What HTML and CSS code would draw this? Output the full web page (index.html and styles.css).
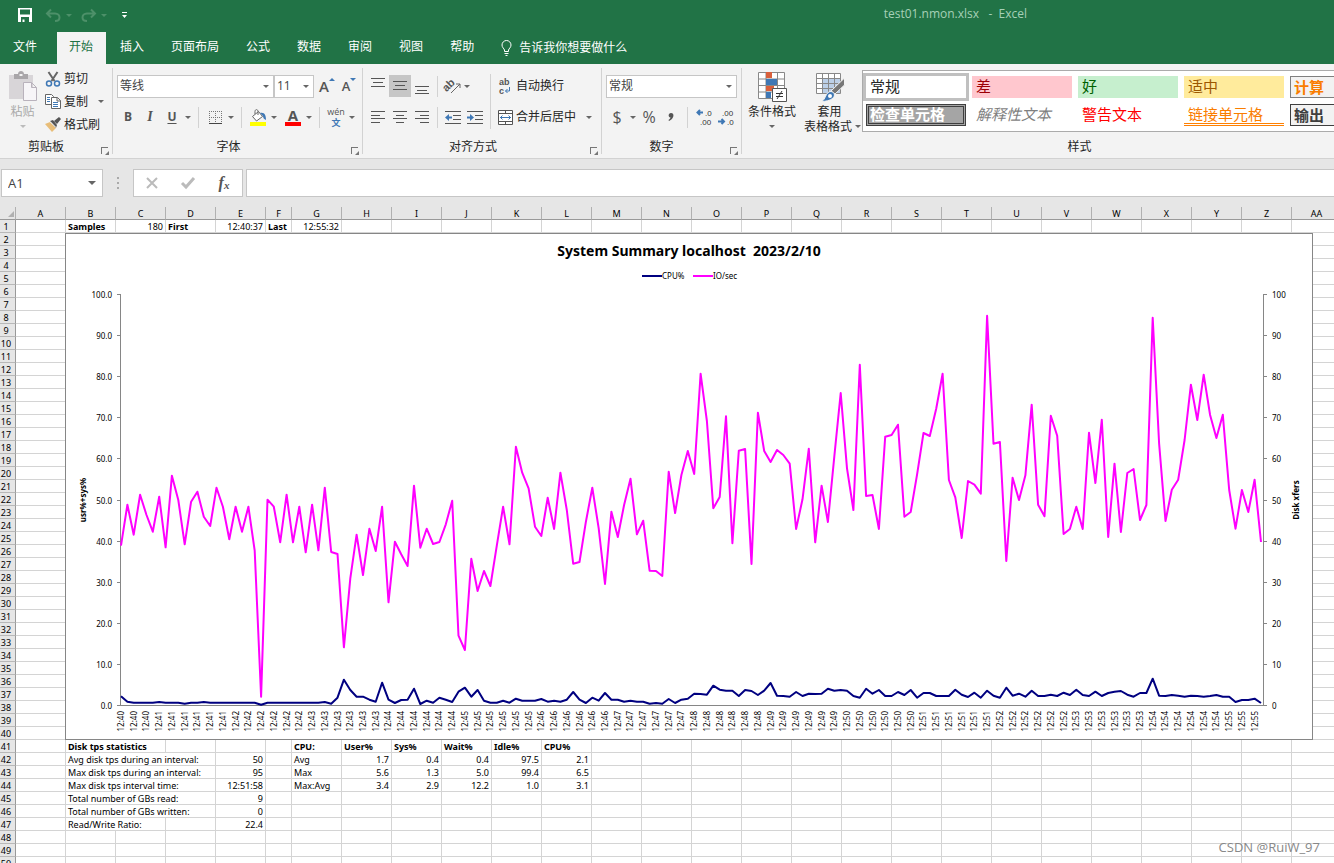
FILE: index.html
```html
<!DOCTYPE html>
<html lang="zh-CN">
<head>
<meta charset="utf-8">
<title>test01.nmon.xlsx - Excel</title>
<link rel="stylesheet" href="styles.css">
</head>
<body>
<header class="titlebar">
  <div class="quick">
    <button class="plain" aria-label="保存"><svg width="14" height="14" viewBox="0 0 14 14"><path fill="#fff" fill-rule="evenodd" d="M0 0h14v14H0zM2 1.500v5h10v-5zM3 9v5h1.500v-2.500h2V14H11V9z"/></svg></button>
    <button class="plain undo" aria-label="撤消"><svg width="15" height="13" viewBox="0 0 15 13"><path d="M5 .5L1 4.500l4 4M1.500 4.500H9c3 0 4.500 2 4.500 4S12 12 9 12" fill="none" stroke="#4d9069" stroke-width="2"/></svg></button>
    <span class="dd faded"></span>
    <button class="plain redo" aria-label="恢复"><svg width="15" height="13" viewBox="0 0 15 13"><path d="M10 .5l4 4-4 4M13.500 4.500H6c-3 0-4.500 2-4.500 4S3 12 6 12" fill="none" stroke="#4d9069" stroke-width="2"/></svg></button>
    <span class="dd faded"></span>
    <button class="plain more" aria-label="自定义快速访问工具栏"><svg width="5" height="6" viewBox="0 0 5 6"><path fill="#fff" d="M0 0h5v1H0zM0 3h5L2.500 6z"/></svg></button>
  </div>
  <div class="doc-title">test01.nmon.xlsx&nbsp;&nbsp; -&nbsp; Excel</div>
</header>
<nav class="tabs">
  <button class="tab">文件</button>
  <button class="tab active">开始</button>
  <button class="tab">插入</button>
  <button class="tab">页面布局</button>
  <button class="tab">公式</button>
  <button class="tab">数据</button>
  <button class="tab">审阅</button>
  <button class="tab">视图</button>
  <button class="tab">帮助</button>
  <button class="tab tell"><svg width="11" height="16" viewBox="0 0 11 16"><path fill="none" stroke="#fff" d="M3.500 11.500V10C3 8.500 1 7.500 1 5a4.500 4.500 0 0 1 9 0c0 2.500-2 3.500-2.500 5v1.500zM3.500 13.500h4M4.500 15.500h2"/></svg>告诉我你想要做什么</button>
</nav>

<section class="ribbon">
  <div class="group clipboard">
    <div class="tools">
      <button class="big paste">
        <svg width="30" height="31" viewBox="0 0 30 31"><path fill="#d8d5d8" d="M1 4h24v24H1z"/><path fill="#a9a6a9" d="M6 3h4c0-4 6-4 6 0h4v5H6z"/><path fill="#f3f3f3" d="M11.500 3h3v2h-3z"/><path fill="#f7f5f8" stroke="#b9b2bc" d="M15.500 11.500h8l5 5v13h-13zM23.500 11.500v5h5"/></svg>
        <span>粘贴</span><span class="dd"></span>
      </button>
      <div class="stack">
        <button class="cmd"><svg width="16" height="16" viewBox="0 0 16 16"><path d="M3.500 1l6 9M12.500 1l-6 9" stroke="#666" stroke-width="2"/><circle cx="4" cy="12.500" r="2.500" fill="none" stroke="#3f78b5" stroke-width="1.500"/><circle cx="12" cy="12.500" r="2.500" fill="none" stroke="#3f78b5" stroke-width="1.500"/></svg>剪切</button>
        <button class="cmd"><svg width="16" height="15" viewBox="0 0 16 15"><path fill="#fff" stroke="#666" d="M.5.5h6l2 2v8h-8z"/><path stroke="#3f78b5" d="M2 3.500h3M2 5.500h3M2 7.500h3"/><path fill="#fff" stroke="#666" d="M6.500 3.500h6l3 3v8h-9zM12 3.500v3.500h3.500"/><path stroke="#3f78b5" d="M8 8.500h5M8 10.500h5M8 12.500h5"/></svg>复制<span class="dd"></span></button>
        <button class="cmd"><svg width="16" height="15" viewBox="0 0 16 15"><path fill="#e8bd78" d="M0 7l5-2 6 6-4 4z"/><path fill="#555" d="M5 4l3-1 4 5-1 3zM9 4l5-4 2 2-4 5z"/><path stroke="#f3f3f3" d="M5 4.500l6 6"/></svg>格式刷</button>
      </div>
    </div>
    <div class="caption">剪贴板<i class="launch"></i></div>
  </div>

  <div class="group font">
    <div class="tools rows">
      <div class="row">
        <label class="combo face"><select aria-label="字体"><option>等线</option></select></label>
        <label class="combo size"><select aria-label="字号"><option>11</option></select></label>
        <button class="ico grow" aria-label="增大字号"><b class="letter">A</b><i class="up"></i></button>
        <button class="ico shrink" aria-label="减小字号"><b class="letter small">A</b><i class="down"></i></button>
      </div>
      <div class="row">
        <button class="ico"><b>B</b></button>
        <button class="ico"><i class="italic">I</i></button>
        <button class="ico"><b class="under">U</b></button><span class="dd gap"></span>
        <span class="vr"></span>
        <button class="ico" aria-label="边框"><svg width="13" height="13" viewBox="0 0 13 13"><path d="M.5 0v12M6.500 0v12M12.500 0v12M0 .5h13M0 6.500h13" stroke="#777" stroke-dasharray="1 1"/><path d="M0 12.500h13" stroke="#444"/></svg></button><span class="dd gap"></span>
        <span class="vr"></span>
        <button class="ico" aria-label="填充颜色"><svg width="17" height="17" viewBox="0 0 17 17"><path fill="#fff" stroke="#666" d="M2.500 7.500l6-5 4 5-6 4.500zM5 5V2.500C5 0 8 0 8 2.500V6"/><path fill="#3f78b5" d="M10 4c5-1 6 3 6 7-2-1-3-2-3-4z"/><path fill="#ff0" d="M0 13h16v4H0z"/></svg></button><span class="dd gap"></span>
        <button class="ico fc" aria-label="字体颜色"><b>A</b><i></i></button><span class="dd gap"></span>
        <span class="vr"></span>
        <button class="ico wen"><span>wén</span><b>文</b></button><span class="dd gap"></span>
      </div>
    </div>
    <div class="caption">字体<i class="launch"></i></div>
  </div>

  <div class="group align">
    <div class="tools">
      <div class="rows left">
        <div class="row">
          <button class="ico" aria-label="顶端对齐"><svg width="14" height="16"><path stroke="#555" d="M0 .5h14M2 4.500h10M0 8.500h14"/></svg></button>
          <button class="ico on" aria-label="垂直居中"><svg width="14" height="16"><path stroke="#555" d="M0 3.500h14M2 7.500h10M0 11.500h14"/></svg></button>
          <button class="ico" aria-label="底端对齐"><svg width="14" height="16"><path stroke="#555" d="M0 8.500h14M2 12.500h10M0 15.500h14"/></svg></button>
          <span class="vr"></span>
          <button class="ico" aria-label="方向"><svg width="17" height="16" viewBox="0 0 17 16"><text x="-2" y="10" transform="rotate(-45 5 8)" class="ab large">ab</text><path fill="none" stroke="#666" d="M6 15L15 6M11 6h4v4"/></svg></button><span class="dd"></span>
        </div>
        <div class="row">
          <button class="ico" aria-label="左对齐"><svg width="14" height="12"><path stroke="#555" d="M0 .5h14M0 4.500h9M0 7.500h14M0 11.500h9"/></svg></button>
          <button class="ico" aria-label="居中"><svg width="14" height="12"><path stroke="#555" d="M0 .5h14M3 4.500h8M0 7.500h14M3 11.500h8"/></svg></button>
          <button class="ico" aria-label="右对齐"><svg width="14" height="12"><path stroke="#555" d="M0 .5h14M5 4.500h9M0 7.500h14M5 11.500h9"/></svg></button>
          <span class="vr"></span>
          <button class="ico" aria-label="减少缩进"><svg width="16" height="13"><path stroke="#555" d="M0 .5h16M8 4.500h8M8 8.500h8M0 12.500h16"/><path fill="#3f78b5" d="M0 6.500l4-3.500v2.500h3v2H4V10z"/></svg></button>
          <button class="ico" aria-label="增加缩进"><svg width="16" height="13"><path stroke="#555" d="M0 .5h16M8 4.500h8M8 8.500h8M0 12.500h16"/><path fill="#3f78b5" d="M7 6.500L3 3v2.500H0v2h3V10z"/></svg></button>
        </div>
      </div>
      <span class="vr tall"></span>
      <div class="rows right">
        <div class="row"><button class="cmd"><svg width="15" height="16" viewBox="0 0 15 16"><text x="1" y="7" class="ab">ab</text><text x="1" y="16" class="ab">c</text><path fill="none" stroke="#3f78b5" d="M11.500 9v4H7.500M9.500 11l-2 2 2 2"/></svg>自动换行</button></div>
        <div class="row"><button class="cmd"><svg width="15" height="15" viewBox="0 0 15 15"><path fill="#fff" stroke="#555" d="M.5.5h14v14H.5zM.5 3.500h14M.5 11.500h14M7.500.5v3M7.500 11.500v3"/><path fill="none" stroke="#3f78b5" d="M2 7.500h11M4.500 5.500l-2 2 2 2M10.500 5.500l2 2-2 2"/></svg>合并后居中<span class="dd"></span></button></div>
      </div>
    </div>
    <div class="caption">对齐方式<i class="launch"></i></div>
  </div>

  <div class="group number">
    <div class="tools rows">
      <div class="row"><label class="combo fmt"><select aria-label="数字格式"><option>常规</option></select></label></div>
      <div class="row">
        <button class="ico sym">$</button><span class="dd gap"></span>
        <button class="ico sym">%</button>
        <button class="ico" aria-label="千位分隔样式"><svg width="6" height="8" viewBox="0 0 6 8"><path fill="#555" d="M3 0c4 0 3 6-2 8l-.5-1C2 6 2.500 5 2.500 4.500 0 4.500 0 0 3 0z"/></svg></button>
        <span class="vr"></span>
        <button class="ico dec" aria-label="增加小数位数"><svg width="16" height="16" viewBox="0 0 16 16"><path fill="none" stroke="#3f78b5" stroke-width="2" d="M7 3.500H2M4 1L1.500 3.500 4 6"/><text x="9" y="7">.0</text><text x="4" y="16">.00</text></svg></button>
        <button class="ico dec" aria-label="减少小数位数"><svg width="16" height="16" viewBox="0 0 16 16"><text x="4" y="7">.00</text><text x="9" y="16">.0</text><path fill="none" stroke="#3f78b5" stroke-width="2" d="M0 12.500h5M3.500 10L6 12.500 3.500 15"/></svg></button>
      </div>
    </div>
    <div class="caption">数字<i class="launch"></i></div>
  </div>

  <div class="group styles">
    <div class="tools">
      <button class="big cond">
        <svg width="30" height="31" viewBox="0 0 30 31"><path fill="#fff" stroke="#888" d="M1.500 1.500h26v26h-26zM1.500 8h26M1.500 14.500h26M1.500 21h26M9 1.500v26M20.500 1.500v26"/><path fill="#d9603c" d="M9 1h6v6H9zM9 15h8v5H9z"/><path fill="#3f78b5" d="M9 8h11v6H9zM9 21h5v6H9z"/><path fill="#fff" stroke="#555" d="M15.500 17.500h14v13h-14z"/><path stroke="#333" d="M19 22.500h7M19 25.500h7M25 20l-5 8"/></svg>
        <span>条件格式</span><span class="dd"></span>
      </button>
      <button class="big tbl">
        <svg width="30" height="31" viewBox="0 0 30 31"><path fill="#fff" stroke="#888" d="M1.500 2.500h24v20h-24z"/><path fill="#bcd0e8" d="M7 7h18v15H7z"/><path stroke="#888" d="M1.500 7.500h24M1.500 12.500h24M1.500 17.500h24M7.500 2.500v20M13.500 2.500v20M19.500 2.500v20"/><path fill="#777" stroke="#f3f3f3" d="M29.500 7v7L20 23l-4-3z"/><path fill="#3f78b5" stroke="#f3f3f3" d="M6 30.500c5-1 4-10 10-10 6 1 5 10-10 10z"/><circle cx="15" cy="25" r="2" fill="#fff"/></svg>
        <span>套用</span><span class="two">表格格式<i class="dd"></i></span>
      </button>
      <div class="gallery">
        <button class="st sel">常规</button>
        <button class="st bad">差</button>
        <button class="st good">好</button>
        <button class="st neutral">适中</button>
        <button class="st calc">计算</button>
        <button class="st check">检查单元格</button>
        <button class="st expl">解释性文本</button>
        <button class="st warn">警告文本</button>
        <button class="st linked">链接单元格</button>
        <button class="st out">输出</button>
      </div>
    </div>
    <div class="caption">样式</div>
  </div>
</section>

<section class="formula">
  <div class="namebox"><input value="A1" aria-label="名称框"><span class="dd"></span></div>
  <span class="dots"></span>
  <div class="fx">
    <button class="plain" aria-label="取消"><svg width="12" height="12"><path d="M1 1l10 10M11 1L1 11" stroke="#bbb" stroke-width="2"/></svg></button>
    <button class="plain" aria-label="输入"><svg width="14" height="12"><path d="M1 6l4 4 8-9" fill="none" stroke="#bbb" stroke-width="3"/></svg></button>
    <button class="plain fn" aria-label="插入函数">f<small>x</small></button>
  </div>
  <input class="entry" aria-label="编辑栏">
</section>

<main class="sheet">
  <table class="grid" id="grid"></table>
  <svg class="chart" id="chart" width="1248" height="507" viewBox="0 0 1248 507" role="img" aria-label="System Summary"></svg>
</main>
<div class="mark">CSDN @RuiW_97</div>
<script src="app.js"></script>
</body>
</html>
```

FILE: styles.css
```css
* { box-sizing: border-box; }
body {
  margin: 0; height: 100vh; overflow: hidden; display: flex; flex-direction: column;
  position: relative; background: #e6e6e6; color: #262626;
  font: 12px/16px "Open Sans", "Noto Sans CJK SC", sans-serif;
}
button { font: inherit; color: inherit; background: none; border: 0; padding: 0; margin: 0; white-space: nowrap; }
svg { flex: none; display: block; overflow: visible; }
.plain { display: flex; align-items: center; justify-content: center; }
.dd {
  width: 0; height: 0; flex: none; display: block;
  border: 3px solid transparent; border-top-color: #666; border-bottom: 0;
}

.titlebar { flex: none; height: 32px; background: #217346; display: flex; align-items: center; justify-content: space-between; padding: 0 307px 4px 18px; }
.quick { display: flex; align-items: center; padding-top: 2px; }
.undo { margin-left: 14px; margin-right: 5px; }
.redo { margin-left: 9px; margin-right: 5px; }
.more { margin-left: 15px; }
.faded { border-top-color: #4d9069; }
.doc-title { color: #a6d0b7; }

.tabs { flex: none; height: 32px; background: #217346; display: flex; }
.tab { color: #fff; padding: 0 13px 2px 14px; }
.tab.active { background: #f3f3f3; color: #217346; margin-left: 7px; padding: 0 13px 2px 12px; }
.tab:first-child { padding-left: 13px; }
.tab.tell { display: flex; align-items: center; gap: 7px; padding-bottom: 0; }

.ribbon { flex: none; height: 95px; background: #f3f3f3; border-bottom: 1px solid #d2d2d2; display: flex; padding: 4px 0; overflow: hidden; }
.group { flex: none; display: flex; flex-direction: column; border-right: 1px solid #d2d2d2; }
.group.clipboard { width: 113px; }
.group.font { width: 250px; }
.group.align { width: 239px; }
.group.number { width: 140px; }
.group.styles { width: 675px; border-right: 0; }
.tools { flex: none; height: 71px; display: flex; }
.caption { display: flex; align-items: center; justify-content: center; height: 16px; line-height: 18px; padding-right: 20px; position: relative; }
.font .caption, .align .caption { padding-right: 18px; }
.styles .caption { padding: 0; }
.launch { position: absolute; right: 4px; bottom: 1px; width: 7px; height: 7px; border: 1px solid #777; border-right: 0; border-bottom: 0; }
.launch::after { content: ""; position: absolute; right: -1px; bottom: -1px; border: 2px solid #777; border-top-color: transparent; border-left-color: transparent; }

.big { flex: none; display: flex; flex-direction: column; align-items: center; padding-top: 3px; line-height: 15px; }
.big svg { margin-bottom: 2px; }
.big .dd { margin-top: 6px; }
.paste { width: 45px; color: #aaa; }
.paste .dd { border-top-color: #bbb; }
.stack { display: flex; flex-direction: column; gap: 2px; }
.cmd { display: flex; align-items: center; gap: 3px; height: 23px; }
.stack .cmd { height: 21px; }
.cmd .dd { margin-left: 7px; }

.rows { display: flex; flex-direction: column; gap: 9px; padding-top: 7px; }
.row { display: flex; align-items: center; height: 22px; }
.font .rows, .font .tools { padding-left: 4px; }
.combo { position: relative; height: 23px; }
.combo select {
  appearance: none; width: 100%; height: 23px; border: 1px solid #c6c6c6; border-radius: 0;
  background: #fff; font: inherit; color: #444; padding: 0 2px; display: block;
}
.combo::after { content: ""; position: absolute; right: 5px; top: 10px; border: 3px solid transparent; border-top-color: #666; border-bottom: 0; }
.face { width: 157px; }
.size { width: 40px; }
.fmt { width: 131px; }
.ico { flex: none; width: 22px; height: 22px; display: flex; align-items: center; justify-content: center; color: #555; }
.ico.on { background: #c6c6c6; }
.italic { font-family: "Liberation Serif", serif; font-size: 14px; font-weight: bold; }
.under { text-decoration: underline; text-underline-offset: 2px; }
.gap { margin: 0 2px; }
.vr { width: 1px; height: 21px; background: #d2d2d2; margin: 0 5px; flex: none; }
.letter { font-size: 15px; font-weight: 600; }
.letter.small { font-size: 13px; }
.grow { margin-left: 2px; }
.up, .down { border: 3px solid transparent; align-self: flex-start; margin-top: 3px; }
.up { border-bottom-color: #3f78b5; border-top: 0; }
.down { border-top-color: #3f78b5; border-bottom: 0; }
.fc { flex-direction: column; font-size: 15px; line-height: 13px; margin-left: 3px; }
.fc i { width: 16px; height: 4px; background: #f00; }
.wen { flex-direction: column; font-size: 9px; line-height: 11px; }
.wen b { color: #3f78b5; }
.ab { font: bold 9px "Liberation Sans", sans-serif; fill: #555; }
.ab.large { font-size: 11px; }

.align .left { padding-left: 4px; width: 123px; }
.align .left .vr { margin: 0 4px; }
.vr.tall { height: 55px; margin: 6px 7px 0 4px; }
.align .right { padding-top: 7px; }

.number .rows { padding-left: 4px; }
.sym { font-size: 16px; }
.dec text { font: 8px "Liberation Sans", sans-serif; fill: #333; }

.cond { width: 60px; }
.tbl { width: 55px; }
.two { display: flex; align-items: center; gap: 3px; margin-left: 6px; }
.big .two .dd { margin-top: 0; }
.gallery { flex: none; margin: 2px 0 0 5px; width: 560px; height: 62px; border: 1px solid #ababab; background: #fff; display: grid; grid-template-columns: repeat(5, 100px); gap: 6px; grid-auto-rows: 22px; padding: 5px 3px; }
.st { font-size: 15px; line-height: 20px; text-align: left; padding: 0 4px 2px; }
.sel { outline: 3px solid #c0c0c0; background: #fff; }
.bad { background: #ffc7ce; color: #9c0006; }
.good { background: #c6efce; color: #006100; }
.neutral { background: #ffeb9c; color: #9c5700; }
.calc { background: #f2f2f2; color: #fa7d00; border: 1px solid #7f7f7f; font-weight: bold; padding: 0 3px 2px; }
.check { background: #a5a5a5; color: #fff; border: 3px double #3f3f3f; font-weight: bold; line-height: 14px; padding: 0 1px 2px; }
.expl { color: #7f7f7f; font-style: italic; }
.warn { color: #f00; }
.linked { color: #fa7d00; border-bottom: 3px double #ff8001; line-height: 18px; padding-bottom: 0; }
.out { background: #f2f2f2; color: #3f3f3f; border: 1px solid #3f3f3f; font-weight: bold; padding: 0 3px 2px; }

.formula { flex: none; height: 48px; display: flex; padding: 10px 0 10px 1px; }
.namebox { width: 102px; border: 1px solid #c6c6c6; background: #fff; display: flex; align-items: center; padding-right: 6px; }
.namebox input { border: 0; background: none; font: inherit; font-size: 13px; color: #444; flex: 1; min-width: 0; padding: 0 6px; }
.namebox .dd { border-width: 4px 4px 0; }
.dots { width: 2px; height: 12px; margin: 8px 14px; background: repeating-linear-gradient(#aaa 0 2px, transparent 2px 5px); }
.fx { width: 110px; border: 1px solid #c6c6c6; background: #fff; display: grid; grid-template-columns: repeat(3, 36px); }
.fn { font: italic bold 16px/16px "Liberation Serif", serif; color: #555; }
.fn small { font-size: 11px; align-self: center; padding-top: 4px; }
.entry { flex: 1; min-width: 0; margin-left: 3px; border: 1px solid #c6c6c6; border-right: 0; background: #fff; }

.sheet { flex: 1; min-height: 0; overflow: hidden; position: relative; background: #fff; }
.grid { table-layout: fixed; width: 1342px; border-collapse: separate; border-spacing: 0; font: 9px/11px "Noto Sans", sans-serif; color: #000; }
.grid col { width: 50px; }
.grid col.head { width: 16px; }
.grid col.f { width: 26px; }
.grid th, .grid td { height: 13px; padding: 1px 2px 0; border-right: 1px solid #d4d4d4; border-bottom: 1px solid #d4d4d4; white-space: nowrap; overflow: hidden; text-align: left; }
.grid th { background: #e6e6e6; font-weight: normal; text-align: center; }
.grid thead th { border-right-color: #b0b0b0; border-bottom-color: #999; }
.grid tbody th { border-right-color: #999; border-bottom-color: #b8b8b8; padding: 1px 3px 0 0; }
.grid td.n { text-align: right; }
.grid td.b { font-weight: bold; }
.corner::after { content: ""; display: block; margin-left: 6px; border: 3px solid transparent; border-right-color: #b0b0b0; border-bottom-color: #b0b0b0; width: 0; }

.chart { position: absolute; left: 65px; top: 26px; font: 8px "Noto Sans", sans-serif; }
.chart .frame { fill: #fff; stroke: #868686; }
.chart .axis { fill: none; stroke: #868686; }
.chart .series { fill: none; stroke-width: 2; stroke-linejoin: round; }
.chart .io { stroke: #f0f; }
.chart .cpu { stroke: #000080; }
.chart .title { font-size: 14px; font-weight: bold; text-anchor: middle; white-space: pre; }
.chart .name { font-weight: bold; text-anchor: middle; }
.chart .end { text-anchor: end; }
.mark { position: absolute; right: 14px; bottom: 7px; font: 13px/18px "Open Sans", sans-serif; color: #888; }
```

FILE: app.js
```js
const letters = [...'ABCDEFGHIJKLMNOPQRSTUVWXYZ', 'AA'];
const b = (t, span) => ({ t, span, c: 'b' });
const l = (t, span) => ({ t, span, c: '' });
const n = t => ({ t, c: 'n' });

// Filled cells, keyed by row number and column letter
const cells = {
  1: { B: b('Samples'), C: n('180'), D: b('First'), E: n('12:40:37'), F: b('Last'), G: n('12:55:32') },
  41: { B: b('Disk tps statistics', 2), G: b('CPU:'), H: b('User%'), I: b('Sys%'), J: b('Wait%'), K: b('Idle%'), L: b('CPU%') },
  42: { B: l('Avg disk tps during an interval:', 3), E: n('50'), G: l('Avg'), H: n('1.7'), I: n('0.4'), J: n('0.4'), K: n('97.5'), L: n('2.1') },
  43: { B: l('Max disk tps during an interval:', 3), E: n('95'), G: l('Max'), H: n('5.6'), I: n('1.3'), J: n('5.0'), K: n('99.4'), L: n('6.5') },
  44: { B: l('Max disk tps interval time:', 3), E: n('12:51:58'), G: l('Max:Avg'), H: n('3.4'), I: n('2.9'), J: n('12.2'), K: n('1.0'), L: n('3.1') },
  45: { B: l('Total number of GBs read:', 3), E: n('9') },
  46: { B: l('Total number of GBs written:', 3), E: n('0') },
  47: { B: l('Read/Write Ratio:', 2), E: n('22.4') }
};

let html = '<colgroup><col class="head">' + letters.map(x => `<col class="${x === 'F' ? 'f' : ''}">`).join('') + '</colgroup>';
html += '<thead><tr><th class="corner"></th>' + letters.map(x => `<th>${x}</th>`).join('') + '</tr></thead><tbody>';
for (let r = 1; r <= 50; r++) {
  html += `<tr><th>${r}</th>`;
  for (let i = 0; i < letters.length; i++) {
    const cell = (cells[r] || {})[letters[i]];
    if (!cell) { html += '<td></td>'; continue; }
    html += `<td class="${cell.c}" colspan="${cell.span || 1}">${cell.t}</td>`;
    i += (cell.span || 1) - 1;
  }
  html += '</tr>';
}
document.getElementById('grid').innerHTML = html + '</tbody>';

// Series levels: 1277 is zero, 43 is one hundred
const io = [797,674,764,644,705,755,650,802,587,660,793,665,635,710,738,623,680,778,680,755,680,812,1250,659,680,787,644,787,680,817,674,811,623,816,822,1102,895,764,885,746,813,680,967,785,823,858,617,803,746,792,786,733,662,1067,1110,836,933,873,918,797,680,793,500,578,625,740,768,653,747,578,690,851,846,725,623,745,912,695,771,675,596,763,722,872,873,888,575,699,585,513,582,281,423,685,651,409,790,512,507,852,398,513,546,510,525,551,747,658,506,787,617,726,530,339,565,690,254,648,645,747,470,465,434,710,696,583,459,468,386,281,600,652,774,603,614,641,107,491,486,843,593,660,586,374,674,709,407,467,762,747,680,747,458,609,419,771,551,756,579,567,720,675,113,490,723,629,599,480,314,420,284,405,474,404,630,746,630,696,599,786];
const cpu = [1249,1265,1268,1268,1268,1268,1266,1268,1268,1268,1271,1268,1268,1266,1268,1268,1268,1268,1268,1268,1268,1268,1274,1268,1268,1268,1268,1268,1268,1268,1268,1268,1266,1271,1253,1199,1230,1250,1250,1259,1265,1208,1259,1269,1260,1259,1226,1272,1262,1268,1253,1259,1266,1235,1223,1250,1230,1262,1268,1268,1262,1268,1256,1262,1262,1262,1257,1265,1262,1265,1259,1236,1259,1269,1253,1262,1239,1259,1259,1265,1262,1265,1265,1271,1269,1271,1257,1269,1259,1256,1241,1242,1244,1217,1229,1232,1232,1248,1230,1233,1245,1232,1209,1247,1248,1250,1236,1248,1241,1242,1241,1226,1232,1230,1232,1248,1253,1226,1241,1230,1248,1248,1236,1245,1230,1253,1239,1239,1248,1248,1248,1229,1244,1251,1238,1253,1232,1247,1253,1223,1247,1241,1250,1232,1248,1248,1244,1248,1238,1245,1229,1245,1248,1235,1248,1239,1235,1233,1244,1250,1239,1239,1196,1247,1248,1245,1247,1250,1247,1248,1250,1248,1245,1250,1250,1266,1260,1260,1256,1269];
const step = 1140 / 179;
const line = s => s.map((v, i) => `${(56 + i * step).toFixed(1)},${(47 + v / 3).toFixed(1)}`).join(' ');

let svg = '<rect class="frame" x=".5" y=".5" width="1247" height="506"/>';
svg += '<text class="title" x="624" y="23">System Summary localhost  2023/2/10</text>';
svg += '<path class="series cpu" d="M577 43h20"/><text x="597" y="46">CPU%</text>';
svg += '<path class="series io" d="M628 43h20"/><text x="648" y="46">IO/sec</text>';
svg += '<path class="axis" d="M55.5 61V472.5H1198.5V61"/>';
for (let v = 0; v <= 100; v += 10) {
  const y = Math.round(472 - v * 4.11);
  svg += `<path class="axis" d="M52 ${y + 0.5}h4M1198 ${y + 0.5}h4"/>`;
  svg += `<text class="end" x="47" y="${y + 4}">${v}.0</text><text x="1207" y="${y + 4}">${v}</text>`;
}
for (let k = 0; k < 90; k++) {
  const x = Math.round(59 + k * 2 * step);
  svg += `<text class="end" transform="translate(${x} 478) rotate(-90)">12:${40 + Math.floor((37 + 10 * k) / 60)}</text>`;
}
svg += '<text class="name" transform="translate(21 267) rotate(-90)">usr%+sys%</text>';
svg += '<text class="name" transform="translate(1234 267) rotate(-90)">Disk xfers</text>';
svg += `<polyline class="series cpu" points="${line(cpu)}"/><polyline class="series io" points="${line(io)}"/>`;
document.getElementById('chart').innerHTML = svg;
```
